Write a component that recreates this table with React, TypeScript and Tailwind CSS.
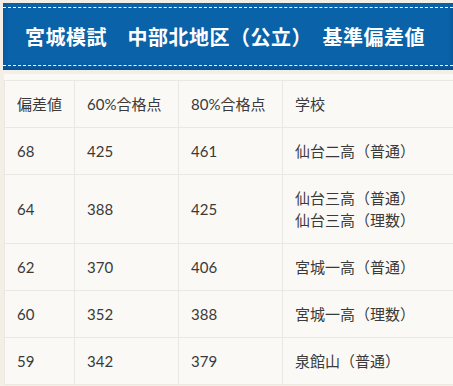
const rows: { dev: string; p60: string; p80: string; schools: string[] }[] = [
  { dev: "68", p60: "425", p80: "461", schools: ["仙台二高（普通）"] },
  { dev: "64", p60: "388", p80: "425", schools: ["仙台三高（普通）", "仙台三高（理数）"] },
  { dev: "62", p60: "370", p80: "406", schools: ["宮城一高（普通）"] },
  { dev: "60", p60: "352", p80: "388", schools: ["宮城一高（理数）"] },
  { dev: "59", p60: "342", p80: "379", schools: ["泉館山（普通）"] },
];

const cell = "border-r border-b border-[#ebe8e2] px-3 py-3 align-middle";

export default function App() {
  return (
    <div className="h-[386px] w-[453px] overflow-hidden bg-[#f3efe6] pt-[3px] font-['Lato','Noto_Sans_CJK_JP',sans-serif] text-[15px] leading-[22px] text-[#3a3a3a]">
      <div className="ml-[3px] h-[67px] bg-[#0a62a8] py-[4px] shadow-[inset_0_-3px_4px_rgba(0,40,90,0.35)]">
        <div className="flex h-[59px] items-center justify-center border-y border-dashed border-white">
          <h1 className="whitespace-pre pr-[6px] font-['Noto_Sans_CJK_JP',sans-serif] text-[20px] font-bold tracking-[0.5px] text-white">
            宮城模試　中部北地区（公立）　基準偏差値
          </h1>
        </div>
      </div>

      <div className="ml-[4px] mt-[4px] w-[460px] bg-[#faf9f6] pt-[6px]">
        <table className="w-full border-collapse border-l border-[#ebe8e2] text-left">
          <thead>
            <tr className="border-t border-[#ebe8e2]">
              <th className={`${cell} w-[70px] font-normal`}>偏差値</th>
              <th className={`${cell} w-[104px] font-normal`}>60%合格点</th>
              <th className={`${cell} w-[104px] font-normal`}>80%合格点</th>
              <th className={`${cell} font-normal`}>学校</th>
            </tr>
          </thead>
          <tbody>
            {rows.map((r) => (
              <tr key={r.dev}>
                <td className={cell}>{r.dev}</td>
                <td className={cell}>{r.p60}</td>
                <td className={cell}>{r.p80}</td>
                <td className={cell}>
                  {r.schools.map((s) => (
                    <div key={s}>{s}</div>
                  ))}
                </td>
              </tr>
            ))}
          </tbody>
        </table>
      </div>
    </div>
  );
}
